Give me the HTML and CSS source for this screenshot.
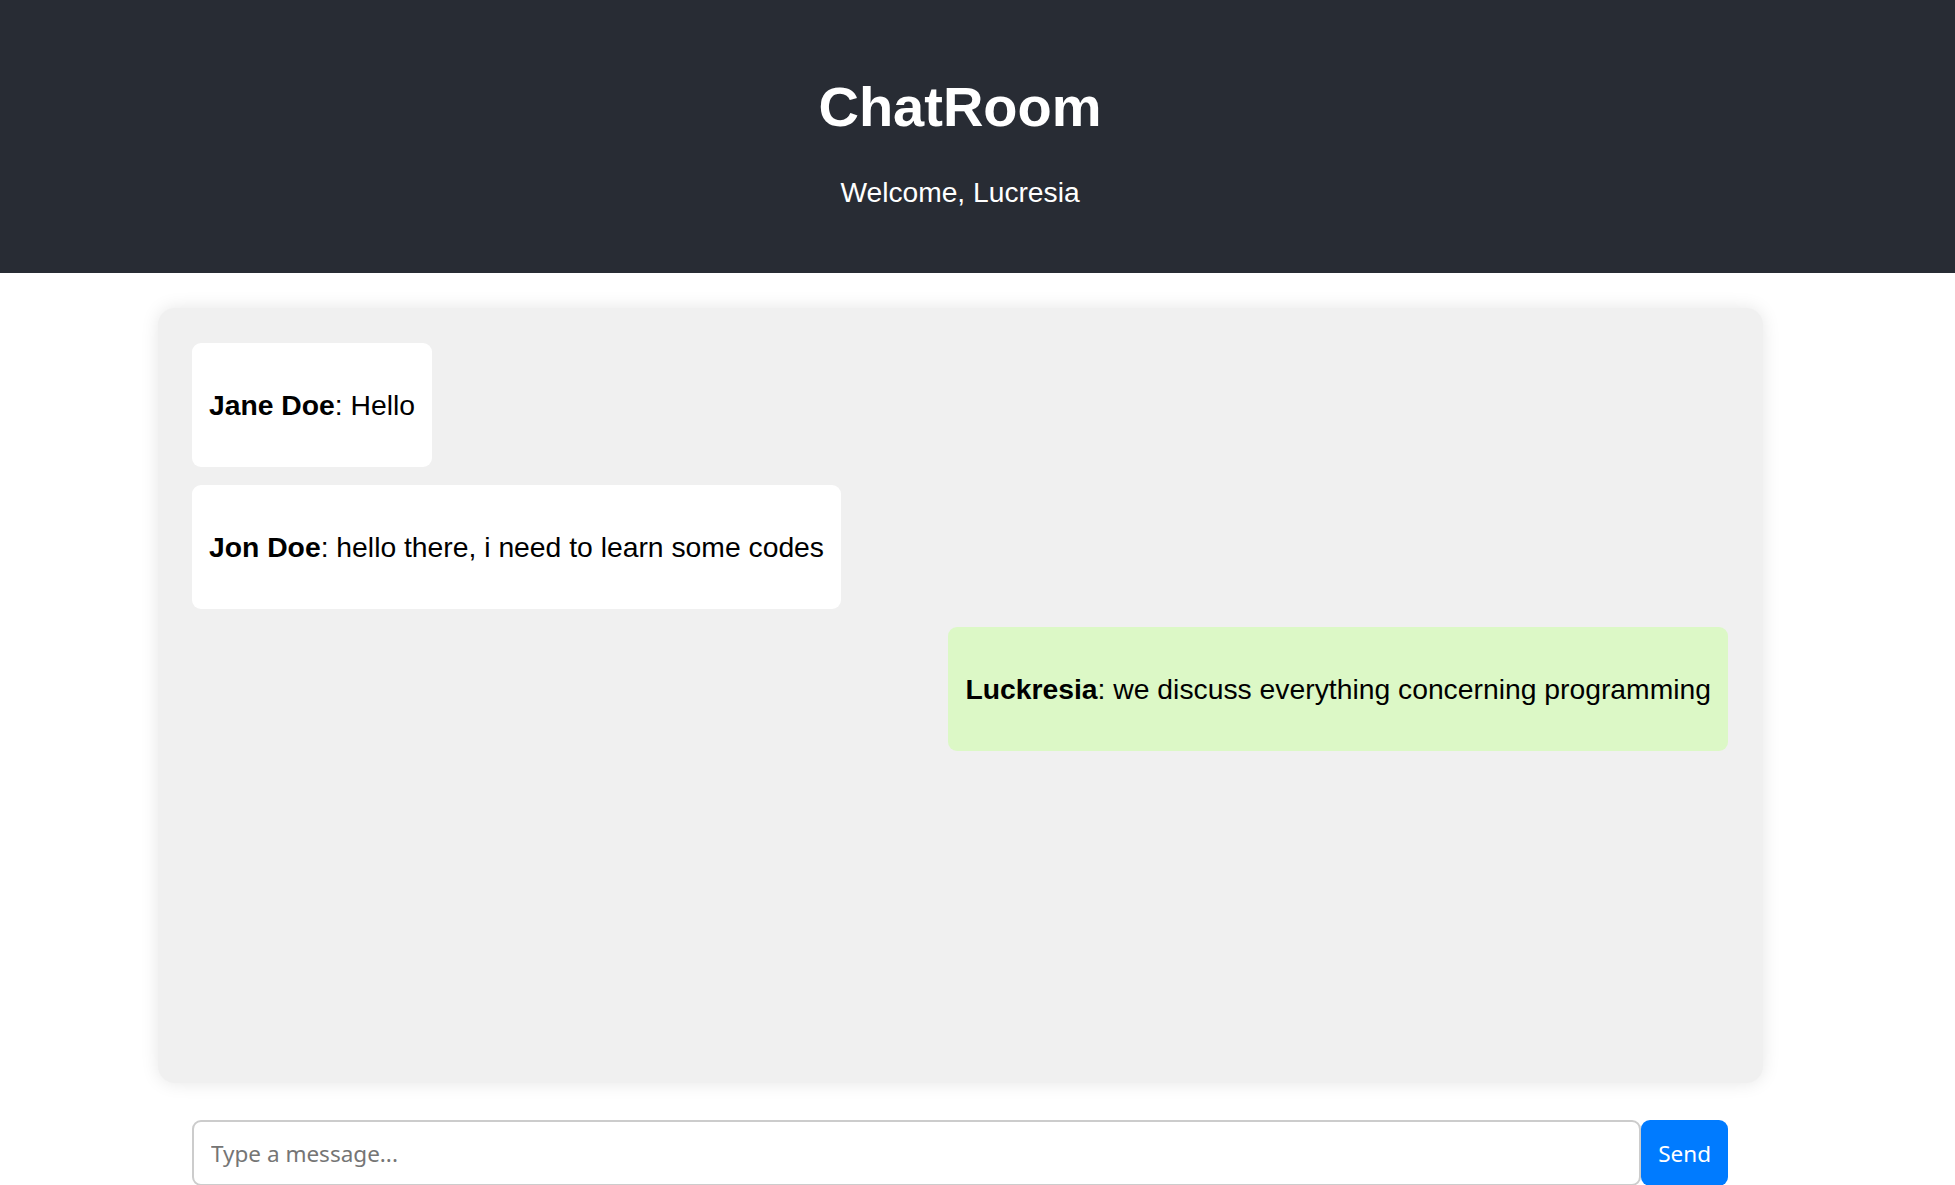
FILE: index.html
```html
<!DOCTYPE html>
<html lang="en">
<head>
<meta charset="utf-8">
<title>ChatRoom</title>
<link rel="stylesheet" href="styles.css">
</head>
<body>
<header class="app-header">
  <h1 class="app-title">ChatRoom</h1>
  <p class="app-welcome">Welcome, Lucresia</p>
</header>
<main class="app-main">
  <section class="chat-box">
    <div class="msg">
      <p><strong>Jane Doe</strong>: Hello</p>
    </div>
    <div class="msg">
      <p><strong>Jon Doe</strong>: hello there, i need to learn some codes</p>
    </div>
    <div class="msg msg-own">
      <p><strong>Luckresia</strong>: we discuss everything concerning programming</p>
    </div>
  </section>
  <form class="composer">
    <input class="composer-input" type="text" placeholder="Type a message...">
    <button class="composer-send" type="button">Send</button>
  </form>
</main>
</body>
</html>
```

FILE: styles.css
```css
html, body {
  margin: 0;
  padding: 0;
  background: #ffffff;
}

body {
  font-family: "Liberation Sans", Arial, sans-serif;
  color: #000;
  overflow: hidden;
}

.app-header {
  background: #282c34;
  color: #ffffff;
  text-align: center;
  padding: 38px 35px 37px 0;
}

.app-title {
  margin: 37px 0;
  font-size: 56px;
  font-weight: bold;
  line-height: 64px;
}

.app-welcome {
  margin: 28px 0;
  font-size: 28.2px;
  line-height: 32px;
}

.app-main {
  width: 1605px;
  margin-left: 158px;
  padding-top: 35px;
}

.chat-box {
  box-sizing: border-box;
  height: 775px;
  padding: 35px 35px 35px 34px;
  background: #f0f0f0;
  border-radius: 17px;
  box-shadow: 0 0 18px rgba(0, 0, 0, 0.1);
  display: flex;
  flex-direction: column;
  align-items: flex-start;
  gap: 18px;
  overflow: hidden;
}

.msg {
  background: #ffffff;
  border-radius: 9px;
  padding: 18px 17px;
}

.msg p {
  margin: 28px 0;
  font-size: 28.3px;
  line-height: 32px;
}

.msg-own {
  align-self: flex-end;
  background: #dcf8c6;
}

.composer {
  display: flex;
  margin: 37px 35px 0 34px;
}

.composer-input {
  flex: 1;
  box-sizing: border-box;
  height: 66px;
  padding: 0 17px;
  border: 2px solid #cccccc;
  border-radius: 9px;
  font-family: "Noto Sans", "Open Sans", sans-serif;
  font-size: 22.5px;
  color: #000;
  outline: none;
}

.composer-input::placeholder {
  color: #757575;
}

.composer-send {
  box-sizing: border-box;
  height: 66px;
  padding: 0 17px;
  border: none;
  border-radius: 9px;
  background: #007bff;
  color: #ffffff;
  font-family: "Noto Sans", "Open Sans", sans-serif;
  font-size: 22.5px;
  cursor: pointer;
}
```
